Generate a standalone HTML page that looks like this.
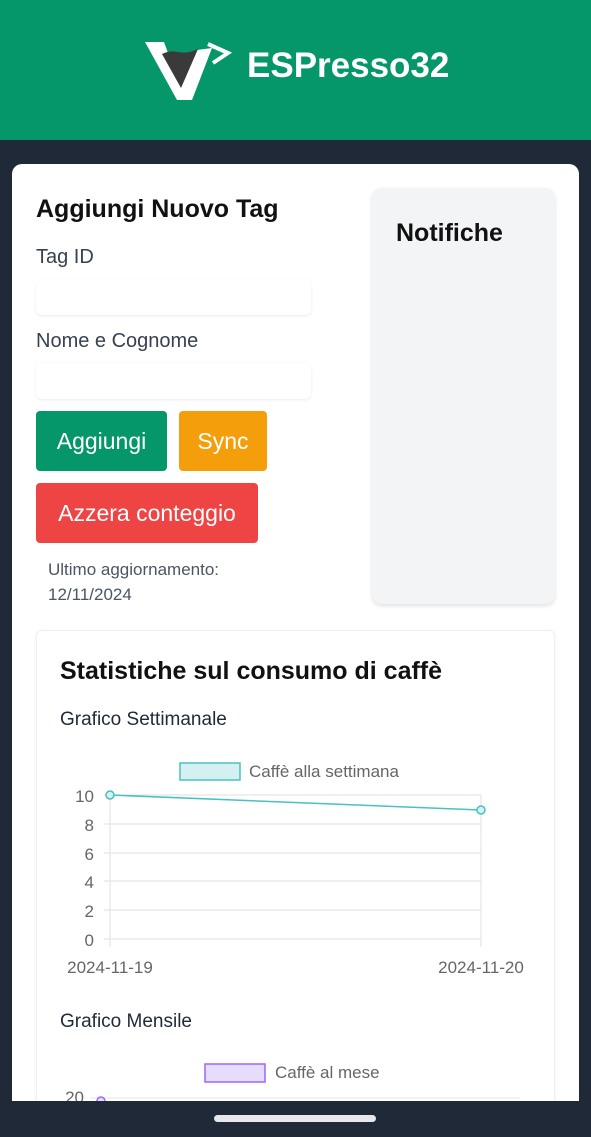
<!DOCTYPE html>
<html><head><meta charset="utf-8"><style>
*{margin:0;padding:0;box-sizing:border-box}
html,body{width:591px;height:1137px;overflow:hidden}
body{background:#1f2937;font-family:"Liberation Sans",sans-serif;position:relative}
.hdr{position:absolute;left:0;top:0;width:591px;height:140px;background:#059669}
.hdr .t{position:absolute;left:247px;top:46px;color:#fff;font-weight:bold;font-size:35px}
.card{position:absolute;left:12px;top:164px;width:567px;height:937px;background:#fff;border-radius:10px 10px 0 0}
.a{position:absolute;color:#111}
.lbl{position:absolute;color:#374151;font-size:20px}
.inp{position:absolute;left:36px;width:275px;height:36px;border-radius:6px;box-shadow:0 1px 3px rgba(0,0,0,.08)}
.btn{position:absolute;color:#fff;font-size:23px;border-radius:4px;text-align:center}
.notif{position:absolute;left:372px;top:188px;width:183px;height:416px;background:#f3f4f6;border-radius:10px;box-shadow:0 2px 4px rgba(0,0,0,.12)}
.stat{position:absolute;left:36px;top:630px;width:519px;height:471px;background:#fff;border:1px solid #f0f0f0;border-bottom:none;border-radius:6px 6px 0 0;box-shadow:0 1px 4px rgba(0,0,0,.06)}
.bot{position:absolute;left:0;top:1101px;width:591px;height:36px;background:#1f2937}
.home{position:absolute;left:214px;top:1115px;width:162px;height:7px;border-radius:4px;background:#e5e7eb}
</style></head><body>
<div class="hdr">
<svg style="position:absolute;left:144px;top:40px" width="90" height="62" viewBox="0 0 90 62">
<path d="M1 2 H20 L36 46 L53 10 L68 8 L48 60 H33 Z" fill="#fff"/>
<path d="M18 14 Q26 10 34 12 Q44 14 54 9 L37 48 Z" fill="#3a3a3a"/>
<path d="M64 4 L84 13 L69 23" fill="none" stroke="#fff" stroke-width="4" stroke-linejoin="miter"/>
</svg>
<div class="t">ESPresso32</div>
</div>
<div class="card"></div>
<div class="a" style="left:36px;top:195px;font-size:25px;font-weight:bold">Aggiungi Nuovo Tag</div>
<div class="lbl" style="left:36px;top:246px">Tag ID</div>
<div class="inp" style="top:279px"></div>
<div class="lbl" style="left:36px;top:330px">Nome e Cognome</div>
<div class="inp" style="top:363px"></div>
<div class="btn" style="left:36px;top:411px;width:131px;height:60px;line-height:60px;background:#059669">Aggiungi</div>
<div class="btn" style="left:179px;top:411px;width:88px;height:60px;line-height:60px;background:#f59e0b">Sync</div>
<div class="btn" style="left:36px;top:483px;width:222px;height:60px;line-height:60px;background:#ef4444">Azzera conteggio</div>
<div class="a" style="left:48px;top:557px;font-size:17px;color:#4b5563;line-height:25px">Ultimo aggiornamento:<br>12/11/2024</div>
<div class="notif"><div class="a" style="left:24px;top:31px;font-size:25px;font-weight:bold">Notifiche</div></div>
<div class="stat"></div>
<div class="a" style="left:60px;top:657px;font-size:25px;font-weight:bold">Statistiche sul consumo di caffè</div>
<div class="lbl" style="left:60px;top:709px;font-size:19px;color:#1f2937">Grafico Settimanale</div>
<svg style="position:absolute;left:0;top:750px" width="591" height="230">
<rect x="180" y="13" width="60" height="17" fill="#d4f0f0" stroke="#4bc0c0" stroke-width="1.5"/>
<text x="249" y="27" font-size="17" fill="#666" font-family="Liberation Sans">Caffè alla settimana</text>
<g stroke="#e5e5e5" stroke-width="1.2">
<line x1="104" y1="45" x2="481" y2="45"/><line x1="104" y1="74" x2="481" y2="74"/><line x1="104" y1="103" x2="481" y2="103"/><line x1="104" y1="131" x2="481" y2="131"/><line x1="104" y1="160" x2="481" y2="160"/><line x1="104" y1="189" x2="481" y2="189"/>
<line x1="110" y1="45" x2="110" y2="197"/><line x1="481" y1="45" x2="481" y2="197"/></g>
<g font-size="17" fill="#666" font-family="Liberation Sans" text-anchor="end">
<text x="94" y="52">10</text><text x="94" y="81">8</text><text x="94" y="110">6</text><text x="94" y="138">4</text><text x="94" y="167">2</text><text x="94" y="196">0</text></g>
<g font-size="17" fill="#666" font-family="Liberation Sans" text-anchor="middle"><text x="110" y="223">2024-11-19</text><text x="481" y="223">2024-11-20</text></g>
<line x1="110" y1="45" x2="481" y2="60" stroke="#4bc0c0" stroke-width="1.5"/>
<circle cx="110" cy="45" r="4" fill="#d4f0f0" stroke="#4bc0c0" stroke-width="1.5"/>
<circle cx="481" cy="60" r="4" fill="#d4f0f0" stroke="#4bc0c0" stroke-width="1.5"/>
</svg>
<div class="lbl" style="left:60px;top:1011px;font-size:19px;color:#1f2937">Grafico Mensile</div>
<svg style="position:absolute;left:0;top:1055px" width="591" height="50">
<rect x="205" y="9" width="60" height="18" fill="#e8dcfc" stroke="#9966ff" stroke-width="1.5"/>
<text x="275" y="23" font-size="17" fill="#666" font-family="Liberation Sans">Caffè al mese</text>
<line x1="90" y1="43" x2="520" y2="43" stroke="#e5e5e5"/>
<text x="84" y="48" font-size="17" fill="#666" font-family="Liberation Sans" text-anchor="end">20</text>
<circle cx="101" cy="46" r="4" fill="#e8dcfc" stroke="#9966ff" stroke-width="1.5"/>
</svg>
<div class="bot"></div>
<div class="home"></div>
</body></html>
